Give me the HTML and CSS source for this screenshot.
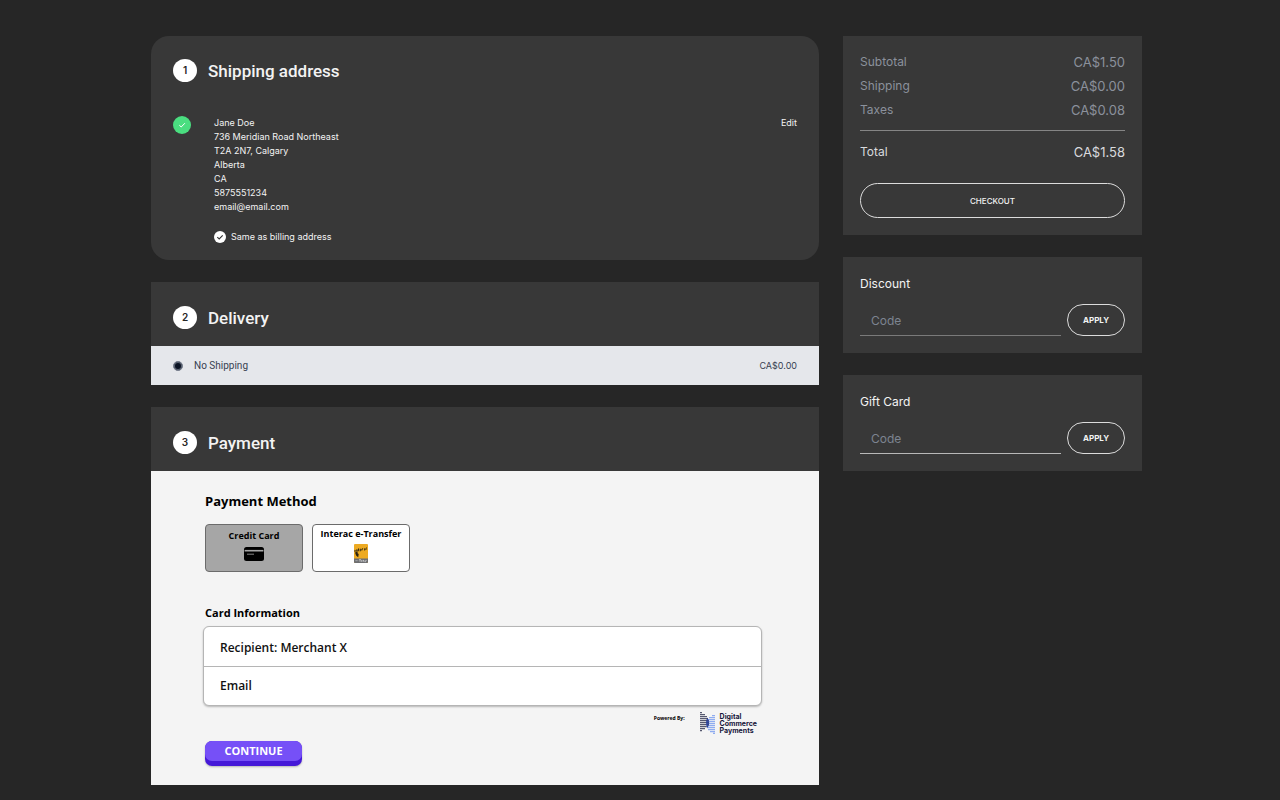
FILE: index.html
```html
<!DOCTYPE html>
<html lang="en">
<head>
<meta charset="utf-8">
<meta name="viewport" content="width=device-width, initial-scale=1">
<title>Checkout</title>
<link rel="stylesheet" href="styles.css">
</head>
<body>
<div class="page">
  <main class="steps">
    <section class="card card-rounded">
      <header class="step-head"><span class="step-number">1</span><h2 class="step-title">Shipping address</h2></header>
      <div class="address-row">
        <svg class="done-icon" viewBox="0 0 18 18" aria-hidden="true"><circle cx="9" cy="9" r="9" fill="#4ade80"/><path d="M6.3 9.2l1.9 1.8 3.7-3.8" fill="none" stroke="#fff" stroke-width="1"/></svg>
        <address class="address">
          Jane Doe<br>736 Meridian Road Northeast<br>T2A 2N7, Calgary<br>Alberta<br>CA<br>5875551234<br>email@email.com
        </address>
        <button class="edit" type="button">Edit</button>
      </div>
      <label class="same"><input class="same-box" type="checkbox" checked><svg class="same-icon" viewBox="0 0 12 12" aria-hidden="true"><circle cx="6" cy="6" r="6" fill="#fff"/><path d="M3.3 6.1l1.9 1.8 3.5-3.6" fill="none" stroke="#333" stroke-width="1.1"/></svg>Same as billing address</label>
    </section>

    <section class="card">
      <header class="step-head"><span class="step-number">2</span><h2 class="step-title">Delivery</h2></header>
      <label class="delivery-row"><input class="delivery-radio" type="radio" name="delivery" checked><span class="delivery-name">No Shipping</span><span class="delivery-price">CA$0.00</span></label>
    </section>

    <section class="card">
      <header class="step-head"><span class="step-number">3</span><h2 class="step-title">Payment</h2></header>
      <form class="payment">
        <h3 class="payment-title">Payment Method</h3>
        <div class="methods">
          <button class="method method-selected" type="button">Credit Card
            <svg class="card-icon" viewBox="0 0 20 14" aria-hidden="true"><rect width="20" height="14" rx="2.5" fill="#000"/><path d="M.6 3.7h18.8" stroke="#a6a6a6" stroke-width="1.6"/><path d="M3 7.2h7" stroke="#a6a6a6" stroke-width=".8"/></svg>
          </button>
          <button class="method" type="button">Interac e-Transfer
            <svg class="interac-icon" viewBox="0 0 14 19" aria-hidden="true"><rect width="14" height="19" rx="1" fill="#edaa22"/><path d="M0 14.5h14V18a1 1 0 0 1-1 1H1a1 1 0 0 1-1-1z" fill="#6d6e71"/><path d="M1.4 8l2.2-.4v1.6l1.1.9-.5 3.1-1.9-1.4-1-2.3z" fill="#2b2414"/><path d="M.9 5.9v2M2.1 7.7V6l1.2-.2v1.6M4.5 4.5V7l.8-.1M3.9 5.4l1.3-.2M6.1 6.2l1.2-.5c-.2-1-1.3-.7-1.3.3s.9 1 1.4.4M8.2 6.3V4.7l.9-.2M10 5.1c.8-.7 1.2-.4 1.2.9-1.3.3-1.5-.3 0-.6M13 3.8c-1.3-.2-1.4 1.7 0 1.4" fill="none" stroke="#2b2414" stroke-width=".8"/><path d="M1.5 16.7h1.3M3.5 16.7h.7M5 15.7h2M6 15.7v2.1M7.5 17.8v-1.4h.8M9 17.8v-1.4h1v1.4M10.7 17.7h1v-1.3h.9" fill="none" stroke="#fff" stroke-width=".5"/></svg>
          </button>
        </div>
        <h3 class="info-title">Card Information</h3>
        <div class="fields">
          <input class="field" type="text" value="Recipient: Merchant X" aria-label="Recipient" readonly>
          <input class="field" type="email" placeholder="Email" aria-label="Email">
        </div>
        <div class="powered">
          <span class="powered-label">Powered By:</span>
          <svg class="powered-logo" viewBox="0 0 16 22" aria-hidden="true">
            <path d="M1 .7h2M1 2.7h5M1 4.7h7M1 6.7h8M1 8.7h9M1 10.7h9M1 12.7h9M1 14.7h8M1 16.7h5M1 18.7h2" stroke="#56586f" stroke-width="1.3"/>
            <path d="M13 3.7h3M10 5.7h6M8 7.7h8M7 9.7h9M7 11.7h9M7 13.7h9M8 15.7h8M9 17.7h7M11 19.7h5M14 21.3h2" stroke="#8facf0" stroke-width="1.3"/>
            <path d="M8.3 5.5C10.8 9 10.8 12.5 8.5 16C6.6 12 6.6 9 8.3 5.5z" fill="#273b8f" opacity=".85"/>
          </svg>
          <span class="powered-name">Digital<br>Commerce<br>Payments</span>
        </div>
        <button class="continue" type="submit"><span class="continue-face">CONTINUE</span></button>
      </form>
    </section>
  </main>

  <aside class="side">
    <section class="card summary">
      <dl class="totals">
        <div class="line"><dt>Subtotal</dt><dd>CA$1.50</dd></div>
        <div class="line"><dt>Shipping</dt><dd>CA$0.00</dd></div>
        <div class="line"><dt>Taxes</dt><dd>CA$0.08</dd></div>
        <div class="line line-total"><dt>Total</dt><dd>CA$1.58</dd></div>
      </dl>
      <button class="pill checkout" type="button">CHECKOUT</button>
    </section>
    <form class="card promo">
      <label class="promo-label" for="discount">Discount</label>
      <div class="promo-row"><input class="promo-input" id="discount" type="text" placeholder="Code"><button class="pill apply" type="button">APPLY</button></div>
    </form>
    <form class="card promo">
      <label class="promo-label" for="gift">Gift Card</label>
      <div class="promo-row"><input class="promo-input promo-input-bright" id="gift" type="text" placeholder="Code"><button class="pill apply" type="button">APPLY</button></div>
    </form>
  </aside>
</div>
</body>
</html>
```
FILE: styles.css
```css
* { box-sizing: border-box; }
body {
  margin: 0;
  background: #262626;
  color: #f3f3f3;
  font-family: Inter, "Liberation Sans", sans-serif;
  font-size: 9px;
}
h2, h3, dl, dd { margin: 0; }
button, input { font: inherit; color: inherit; }
button { cursor: pointer; }

.page {
  display: grid;
  grid-template-columns: minmax(0, 1fr) 299px;
  gap: 24px;
  align-items: start;
  padding: 36px 138px 15px 151px;
}
.steps, .side { display: grid; grid-template-columns: minmax(0, 1fr); gap: 22px; }
.card { background: #383838; }
.card-rounded { border-radius: 18px; padding-bottom: 17px; }

.step-head {
  display: flex;
  align-items: center;
  gap: 11px;
  height: 64px;
  padding: 6px 22px 0;
}
.card-rounded .step-head { height: 62px; }
.step-number {
  width: 24px;
  height: 23px;
  border-radius: 50%;
  background: #fff;
  color: #262626;
  font-size: 10px;
  font-weight: 600;
  line-height: 23px;
  text-align: center;
}
.step-title {
  padding-top: 2px;
  font-family: Roboto, Inter, sans-serif;
  font-size: 17px;
  font-weight: 500;
  line-height: 24px;
}

.address-row { display: flex; align-items: flex-start; padding: 18px 22px 0; }
.done-icon { width: 18px; height: 18px; margin-right: 23px; }
.address { flex: 1; font-style: normal; line-height: 14px; }
.edit { border: 0; padding: 0; background: none; line-height: 14px; }
.same { display: flex; align-items: center; margin: 17px 22px 0 63px; line-height: 12px; }
.same-box { position: absolute; opacity: 0; margin: 0; }
.same-icon { width: 12px; height: 12px; margin-right: 5px; }

.delivery-row {
  display: flex;
  align-items: center;
  height: 39px;
  padding: 0 22px;
  background: #e5e7eb;
  color: #374151;
  font-family: Roboto, sans-serif;
  font-size: 10px;
}
.delivery-radio {
  appearance: none;
  width: 10px;
  height: 10px;
  margin: 0 11px 0 0;
  border: 1px solid #7b8291;
  border-radius: 50%;
  background: #0b1324;
  box-shadow: inset 0 0 0 1px #5c6473;
}
.delivery-name { flex: 1; }
.delivery-price { font-family: Inter, sans-serif; font-size: 9px; }

.payment {
  display: flex;
  flex-direction: column;
  align-items: flex-start;
  padding: 20px 57px 19px 54px;
  background: #f4f4f4;
  color: #000;
  font-family: "Open Sans", "Noto Sans", sans-serif;
}
.payment-title { font-size: 13px; font-weight: 700; line-height: 20px; }
.methods { display: flex; gap: 9px; margin-top: 13px; }
.method {
  display: flex;
  flex-direction: column;
  align-items: center;
  justify-content: flex-start;
  gap: 3px;
  width: 98px;
  height: 48px;
  padding: 2px 0 0;
  border: 1px solid #6b6b6b;
  border-radius: 4px;
  background: #fff;
  font-size: 9px;
  font-weight: 700;
  line-height: 14px;
  white-space: nowrap;
}
.method-selected { gap: 4px; padding-top: 4px; background: #a6a6a6; }
.card-icon { width: 20px; height: 14px; }
.interac-icon { width: 14px; height: 19px; }
.info-title { margin-top: 33px; font-size: 11px; font-weight: 700; line-height: 16px; }
.fields {
  align-self: stretch;
  margin: 5px 0 0 -2px;
  border: 1px solid #b5b5b5;
  border-radius: 6px;
  background: #fff;
  box-shadow: 0 1px 2px #00000040;
  overflow: hidden;
}
.field {
  display: block;
  width: 100%;
  height: 39px;
  padding: 2px 16px 0;
  border: 0;
  background: none;
  color: #111;
  font-size: 12px;
  font-weight: 600;
}
.field + .field { padding: 0 16px 2px; border-top: 1px solid #b5b5b5; }
.field::placeholder { color: #111; opacity: 1; }
.powered { display: flex; align-self: flex-end; align-items: flex-start; margin: 6px 5px 0 0; }
.powered-label { margin-right: 14px; font-size: 5px; font-weight: 700; line-height: 12px; }
.powered-logo { width: 16px; height: 22px; margin-right: 5px; }
.powered-name {
  padding-top: 1px;
  color: #17153a;
  font-family: Inter, sans-serif;
  font-size: 7px;
  font-weight: 700;
  line-height: 7px;
}
.continue {
  width: 97px;
  height: 25px;
  margin-top: 7px;
  padding: 0 0 5px;
  border: 0;
  border-radius: 7px;
  background: #4518d8;
  box-shadow: 0 1px 2px #00000040;
  color: #fff;
  font-size: 11px;
  font-weight: 700;
}
.continue-face {
  display: block;
  border-radius: 7px;
  background: #7650f7;
  line-height: 20px;
}

.summary { padding: 16px 17px 17px; }
.line {
  display: flex;
  justify-content: space-between;
  color: #8b919c;
  font-size: 12px;
  line-height: 20px;
}
.line dd { font-size: 13px; }
.line + .line { margin-top: 4px; }
.line-total { color: #d8dade; }
.line + .line-total { margin-top: 10px; padding-top: 11px; border-top: 1px solid #858585; }
.pill {
  border: 1px solid #dcdcdc;
  border-radius: 18px;
  padding: 0;
  background: none;
  color: #f3f3f3;
}
.checkout { width: 100%; height: 35px; margin-top: 21px; font-size: 8px; font-weight: 500; }
.promo { padding: 17px; }
.promo-label { display: block; font-size: 12px; line-height: 20px; }
.promo-row { display: flex; gap: 6px; margin-top: 10px; }
.promo-input {
  flex: 1;
  min-width: 0;
  height: 32px;
  padding: 1px 11px 0;
  border: 0;
  border-bottom: 1px solid #7a7a7a;
  background: none;
  font-size: 12px;
}
.promo-input-bright { border-color: #b8b8b8; }
.promo-input::placeholder { color: #7d8490; opacity: 1; }
.apply { width: 58px; height: 32px; font-size: 8px; font-weight: 700; }

@media (max-width: 900px) {
  .page { grid-template-columns: minmax(0, 1fr); padding: 24px; }
}
```
